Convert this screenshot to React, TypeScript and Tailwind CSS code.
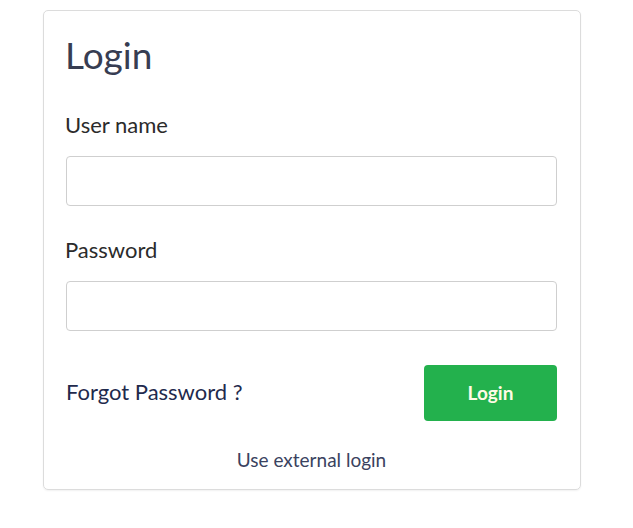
import React from 'react';

export default function App() {
  return (
    <div className="min-h-screen bg-white pt-[10px] pl-[43px]" style={{ fontFamily: 'Lato, "Noto Sans", sans-serif' }}>
      <div className="w-[538px] h-[480px] border border-[#dcdcdc] rounded-[5px] pl-[22px] pr-[23px] pt-[20px] shadow-[0_1px_2px_rgba(0,0,0,0.06)]">
        <h1 className="text-[37px] leading-[48px] text-[#373d52] -ml-[1px]">Login</h1>
        <form className="mt-[32px]" onSubmit={(e) => e.preventDefault()}>
          <label className="block -ml-[1px] text-[22px] leading-[28px] text-[#2b2b2b]">User name</label>
          <input
            type="text"
            className="mt-[17px] block w-full h-[50px] border border-[#cfcfcf] rounded-[4px] px-3 outline-none"
          />
          <label className="block -ml-[1px] mt-[30px] text-[22px] leading-[28px] text-[#2b2b2b]">Password</label>
          <input
            type="password"
            className="mt-[17px] block w-full h-[50px] border border-[#cfcfcf] rounded-[4px] px-3 outline-none"
          />
          <div className="mt-[34px] flex items-center justify-between">
            <a href="#" className="mb-[4px] text-[22px] text-[#1f2a4d]">Forgot Password ?</a>
            <button
              type="submit"
              className="w-[133px] h-[56px] rounded-[4px] bg-[#23b14d] text-[#fffbe6] text-[19px] font-bold"
            >
              Login
            </button>
          </div>
          <p className="mt-[25px] text-center text-[19px] text-[#3a4260]">Use external login</p>
        </form>
      </div>
    </div>
  );
}
